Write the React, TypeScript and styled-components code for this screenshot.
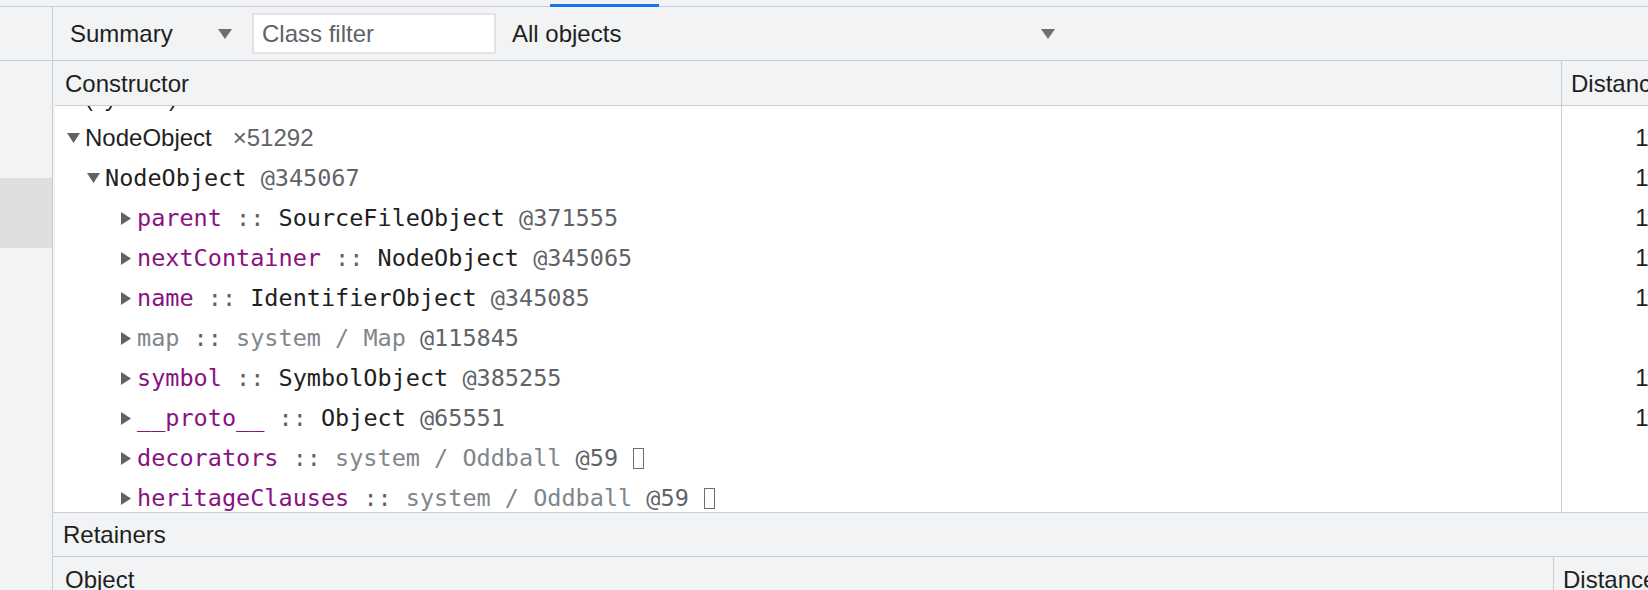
import React from "react";
import styled, { createGlobalStyle } from "styled-components";

const SANS = `"Liberation Sans", Arial, Helvetica, sans-serif`;
const MONO = `"DejaVu Sans Mono", Menlo, monospace`;
const DIVIDER = "#cacdd1";
const PANEL = "#f1f3f4";
const TEXT = "#1f1f1f";
const GREY = "#5f6368";
const LIGHT = "#80868b";
const PURPLE = "#881280";

const GlobalStyle = createGlobalStyle`
  html, body { margin: 0; padding: 0; }
  body { background: ${PANEL}; overflow: hidden; }
  #root { width: 1648px; height: 590px; }
  * { box-sizing: border-box; }
`;

const Root = styled.div`
  width: 1648px;
  height: 590px;
  overflow: hidden;
  display: flex;
  flex-direction: column;
  background: ${PANEL};
  color: ${TEXT};
  font-family: ${SANS};
  font-size: 24px;
`;

const TabStrip = styled.div`
  flex: none;
  height: 7px;
  border-bottom: 1px solid ${DIVIDER};
  display: flex;
  align-items: flex-end;
  padding-left: 550px;
`;

const ActiveTabLine = styled.div`
  width: 109px;
  height: 3px;
  margin-bottom: -1px;
  background: #1a73e8;
`;

const Content = styled.div`
  flex: 1;
  min-height: 0;
  display: flex;
`;

const Sidebar = styled.aside`
  flex: none;
  width: 53px;
  border-right: 1px solid ${DIVIDER};
  display: flex;
  flex-direction: column;
`;

const SidebarHead = styled.div`
  height: 54px;
  border-bottom: 1px solid ${DIVIDER};
`;

const SidebarList = styled.div`
  padding-top: 47px;
  display: flex;
  flex-direction: column;
`;

const SidebarItem = styled.div<{ $selected?: boolean }>`
  height: 70px;
  background: ${(p) => (p.$selected ? "#dedede" : "transparent")};
`;

const Main = styled.main`
  flex: 1;
  min-width: 0;
  display: flex;
  flex-direction: column;
`;

const Toolbar = styled.div`
  flex: none;
  height: 54px;
  border-bottom: 1px solid ${DIVIDER};
  display: flex;
  align-items: center;
  padding-left: 8px;
`;

const Select = styled.div<{ $width: number; $offset?: number }>`
  flex: none;
  width: ${(p) => p.$width}px;
  margin-left: ${(p) => p.$offset ?? 0}px;
  padding: 0 10px 0 9px;
  display: flex;
  align-items: center;
  justify-content: space-between;
  white-space: nowrap;
  color: ${TEXT};
`;

const FilterInput = styled.input`
  flex: none;
  width: 244px;
  height: 41px;
  margin-left: 10px;
  border: 2px solid #e2e3e5;
  background: #ffffff;
  padding: 0 0 0 8px;
  font-family: ${SANS};
  font-size: 24px;
  color: ${TEXT};
  outline: none;
  &::placeholder {
    color: ${GREY};
  }
`;

const Grid = styled.section`
  flex: none;
  margin-left: 2px;
  display: flex;
  flex-direction: column;
  overflow: hidden;
`;

const HeaderRow = styled.div<{ $cols: string }>`
  flex: none;
  display: grid;
  grid-template-columns: ${(p) => p.$cols};
  height: 45px;
  border-bottom: 1px solid ${DIVIDER};
  background: ${PANEL};
`;

const HeaderCell = styled.div<{ $divider?: boolean; $pad: number }>`
  padding-left: ${(p) => p.$pad}px;
  line-height: 45px;
  white-space: nowrap;
  overflow: hidden;
  border-right: ${(p) => (p.$divider ? `1px solid ${DIVIDER}` : "none")};
`;

const Body = styled.div`
  height: 406px;
  overflow: hidden;
  background: #ffffff;
`;

const ScrollContent = styled.div<{ $scrollTop: number }>`
  transform: translateY(${(p) => -p.$scrollTop}px);
`;

const Row = styled.div`
  display: grid;
  grid-template-columns: 1507px 110px;
  height: 40px;
  line-height: 40px;
`;

const NameCell = styled.div<{ $indent: number; $mono: boolean }>`
  display: flex;
  align-items: center;
  padding-left: ${(p) => p.$indent}px;
  border-right: 1px solid ${DIVIDER};
  white-space: pre;
  overflow: hidden;
  font-family: ${(p) => (p.$mono ? MONO : SANS)};
  font-size: ${(p) => (p.$mono ? "23.5px" : "24px")};
`;

const DistanceCell = styled.div`
  text-align: right;
  padding-right: 10px;
  white-space: nowrap;
`;

const Toggle = styled.span<{ $width: number }>`
  flex: none;
  width: ${(p) => p.$width}px;
  display: inline-flex;
  align-items: center;
`;

const Seg = styled.span<{ $color: string }>`
  color: ${(p) => p.$color};
`;

const Count = styled.span`
  color: ${GREY};
  margin-left: 21px;
`;

const Tofu = styled.span`
  display: inline-block;
  width: 11px;
  height: 21px;
  margin-left: 1px;
  border: 1.5px solid #6e6e6e;
`;

const RetainersBar = styled.div`
  flex: none;
  height: 45px;
  border-top: 1px solid ${DIVIDER};
  border-bottom: 1px solid ${DIVIDER};
  padding-left: 10px;
  line-height: 43px;
`;

const DropArrow = () => (
  <svg width="14" height="10" viewBox="0 0 14 10">
    <polygon points="0,0 14,0 7,10" fill="#6e6e6e" />
  </svg>
);

const DownTri = () => (
  <svg width="13" height="10" viewBox="0 0 13 10">
    <polygon points="0,0 13,0 6.5,10" fill={GREY} />
  </svg>
);

const RightTri = () => (
  <svg width="10" height="13" viewBox="0 0 10 13">
    <polygon points="0,0 10,6.5 0,13" fill={GREY} />
  </svg>
);

type Part = { t: string; c: string };
type RowData = {
  indent: number;
  open: boolean;
  tw: number;
  mono: boolean;
  parts: Part[];
  count?: string;
  tofu?: boolean;
  dist?: string;
};

const prop = (name: string, type: string, id: string, dist?: string): RowData => ({
  indent: 66,
  open: false,
  tw: 16,
  mono: true,
  parts: [
    { t: name, c: PURPLE },
    { t: " :: ", c: GREY },
    { t: type, c: TEXT },
    { t: ` ${id}`, c: GREY },
  ],
  dist,
});

const sysProp = (name: string, nameColor: string, type: string, id: string, tofu: boolean): RowData => ({
  indent: 66,
  open: false,
  tw: 16,
  mono: true,
  parts: [
    { t: name, c: nameColor },
    { t: " :: ", c: GREY },
    { t: type, c: LIGHT },
    { t: ` ${id}`, c: GREY },
    { t: tofu ? " " : "", c: GREY },
  ],
  tofu,
});

const rows: RowData[] = [
  { indent: 13, open: false, tw: 17, mono: false, parts: [{ t: "(system)", c: TEXT }], count: "×12868" },
  { indent: 12, open: true, tw: 18, mono: false, parts: [{ t: "NodeObject", c: TEXT }], count: "×51292", dist: "12" },
  {
    indent: 32,
    open: true,
    tw: 18,
    mono: true,
    parts: [
      { t: "NodeObject", c: TEXT },
      { t: " @345067", c: GREY },
    ],
    dist: "12",
  },
  prop("parent", "SourceFileObject", "@371555", "13"),
  prop("nextContainer", "NodeObject", "@345065", "13"),
  prop("name", "IdentifierObject", "@345085", "13"),
  sysProp("map", LIGHT, "system / Map", "@115845", false),
  prop("symbol", "SymbolObject", "@385255", "13"),
  prop("__proto__", "Object", "@65551", "13"),
  sysProp("decorators", PURPLE, "system / Oddball", "@59", true),
  sysProp("heritageClauses", PURPLE, "system / Oddball", "@59", true),
];

export default function App() {
  return (
    <>
      <GlobalStyle />
      <Root>
        <TabStrip>
          <ActiveTabLine />
        </TabStrip>
        <Content>
          <Sidebar>
            <SidebarHead />
            <SidebarList>
              <SidebarItem />
              <SidebarItem $selected />
            </SidebarList>
          </Sidebar>
          <Main>
            <Toolbar>
              <Select $width={181}>
                <span>Summary</span>
                <DropArrow />
              </Select>
              <FilterInput placeholder="Class filter" />
              <Select $width={562} $offset={7}>
                <span>All objects</span>
                <DropArrow />
              </Select>
            </Toolbar>
            <Grid>
              <HeaderRow $cols="1507px 110px">
                <HeaderCell $divider $pad={10}>Constructor</HeaderCell>
                <HeaderCell $pad={9}>Distance</HeaderCell>
              </HeaderRow>
              <Body>
                <ScrollContent $scrollTop={28}>
                  {rows.map((r, i) => (
                    <Row key={i}>
                      <NameCell $indent={r.indent} $mono={r.mono}>
                        <Toggle $width={r.tw}>{r.open ? <DownTri /> : <RightTri />}</Toggle>
                        {r.parts.map((p, j) => (
                          <Seg key={j} $color={p.c}>
                            {p.t}
                          </Seg>
                        ))}
                        {r.tofu && <Tofu />}
                        {r.count && <Count>{r.count}</Count>}
                      </NameCell>
                      <DistanceCell>{r.dist ?? ""}</DistanceCell>
                    </Row>
                  ))}
                </ScrollContent>
              </Body>
            </Grid>
            <RetainersBar>Retainers</RetainersBar>
            <Grid>
              <HeaderRow $cols="1499px 110px">
                <HeaderCell $divider $pad={10}>Object</HeaderCell>
                <HeaderCell $pad={9}>Distance</HeaderCell>
              </HeaderRow>
            </Grid>
          </Main>
        </Content>
      </Root>
    </>
  );
}
